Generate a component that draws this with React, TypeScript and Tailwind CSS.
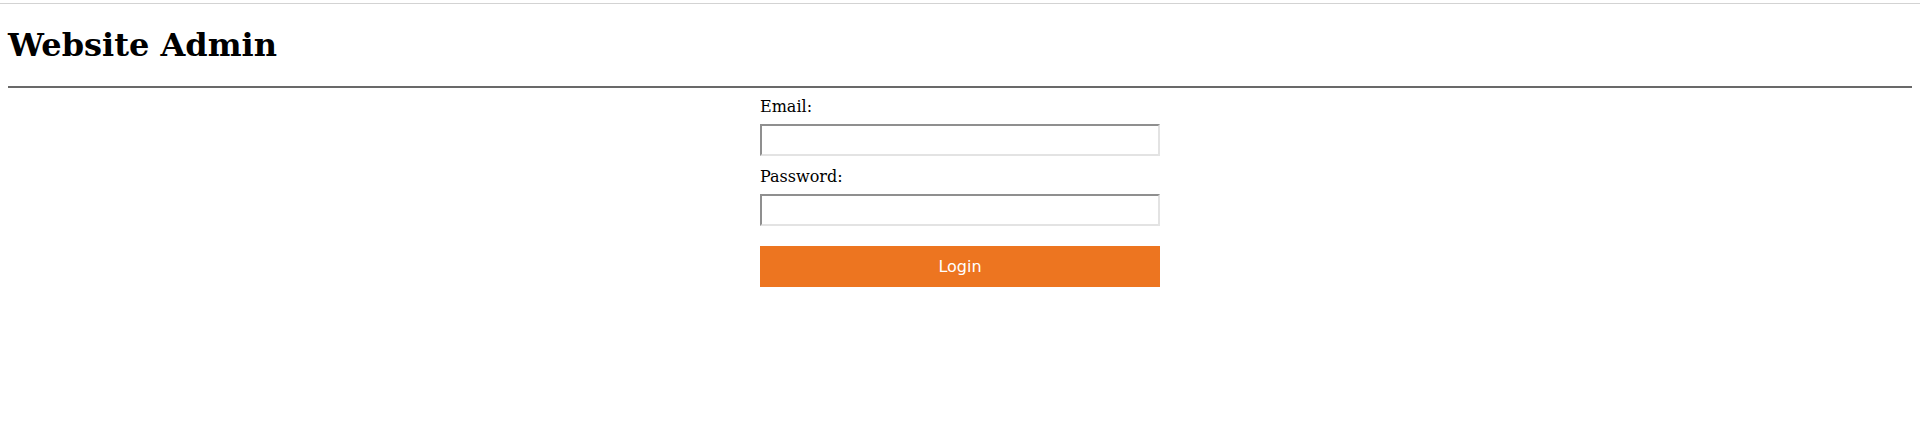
export default function App() {
  return (
    <div className="min-h-screen bg-white text-black" style={{}}>
      <div className="pt-[3px]">
        <div className="h-px bg-[#d3d3d3]"></div>
      </div>
      <div className="px-2 font-['DejaVu_Serif',serif]">
        <h1 className="mt-[23px] text-[32px] leading-[37px] font-bold">Website Admin</h1>
        <div className="mt-[22px] h-[2px] bg-[#696969]"></div>
        <form className="mx-auto w-[400px] flex flex-col" onSubmit={e => e.preventDefault()}>
          <label className="mt-[9px] text-base leading-[19px]">Email:</label>
          <input
            type="email"
            className="mt-2 h-8 border-2 border-t-[#8f8f8f] border-l-[#8f8f8f] border-b-[#e3e3e3] border-r-[#e3e3e3] bg-white px-1"
          />
          <label className="mt-[11px] text-base leading-[19px]">Password:</label>
          <input
            type="password"
            className="mt-2 h-8 border-2 border-t-[#8f8f8f] border-l-[#8f8f8f] border-b-[#e3e3e3] border-r-[#e3e3e3] bg-white px-1"
          />
          <button
            type="submit"
            className="mt-5 h-[41px] bg-[#ed7520] text-white text-base font-['DejaVu_Sans',sans-serif]"
          >
            Login
          </button>
        </form>
      </div>
    </div>
  );
}
